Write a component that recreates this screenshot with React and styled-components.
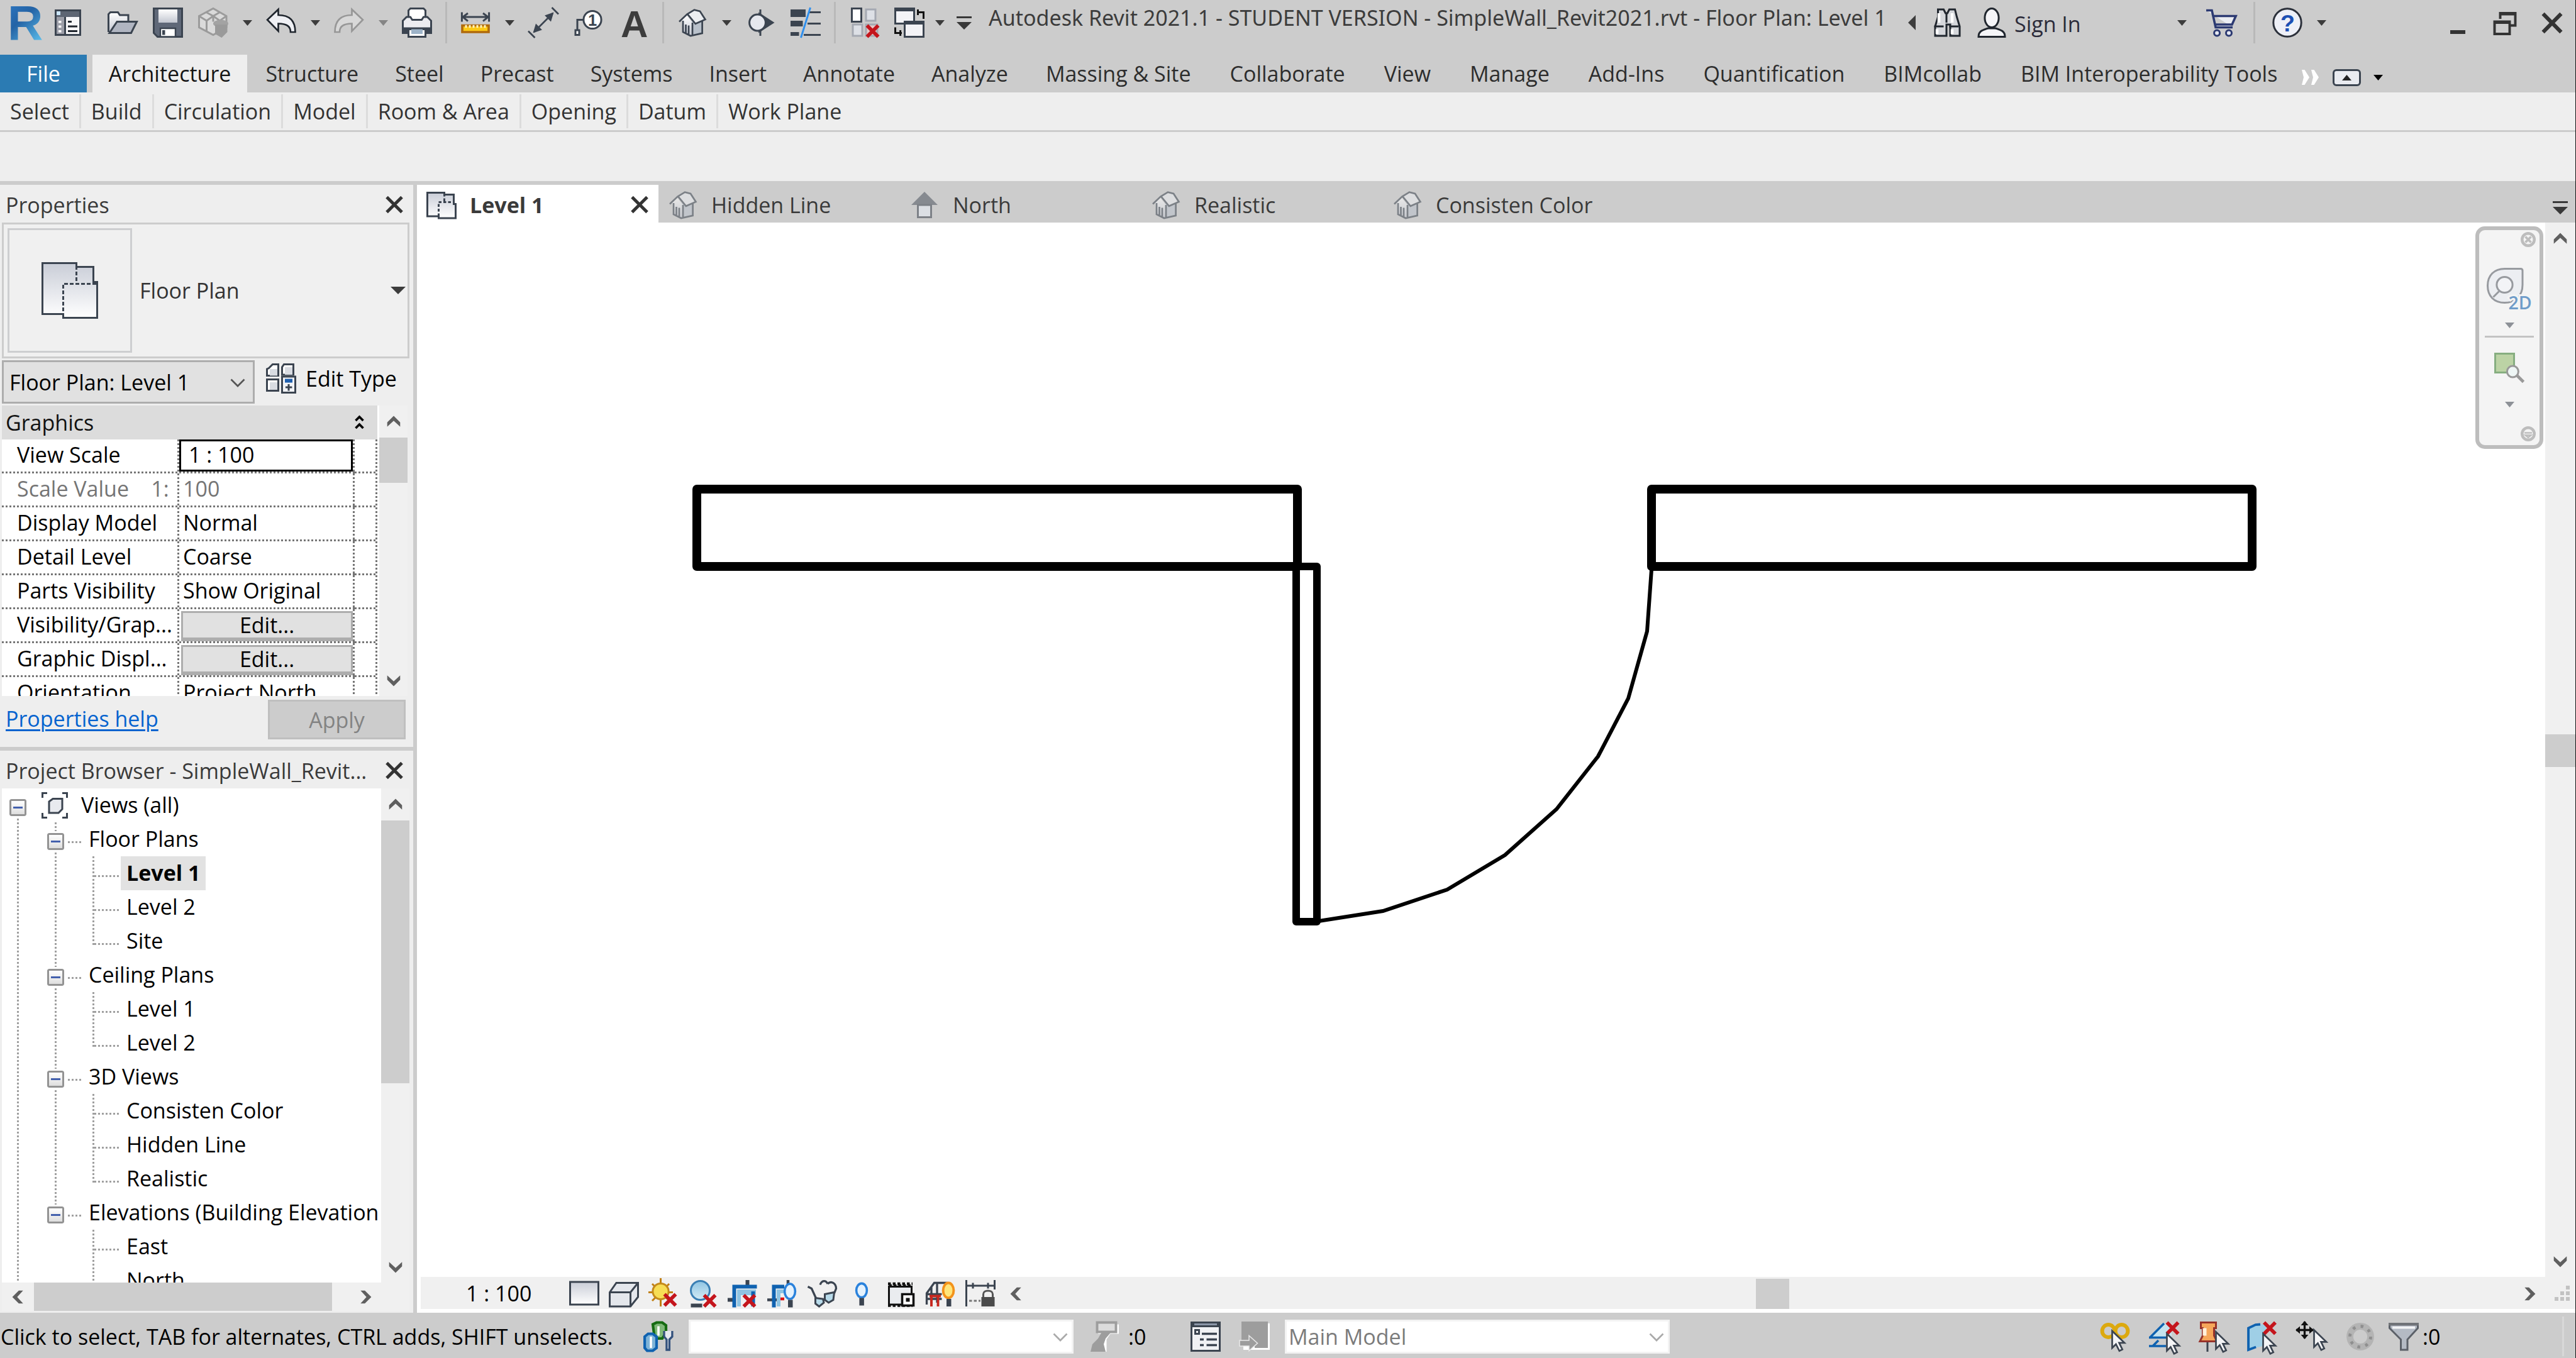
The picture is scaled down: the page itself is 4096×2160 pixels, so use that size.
import React from "react";
import styled, { createGlobalStyle, css } from "styled-components";

const GlobalStyle = createGlobalStyle`
  * { box-sizing: border-box; }
  html, body { margin: 0; padding: 0; }
  body, button, input, select, table {
    font-family: "Open Sans", "Noto Sans", sans-serif;
    font-size: 34px;
    color: #1a1a1a;
  }
  button { background: none; border: 0; padding: 0; margin: 0; }
  ul, h2 { margin: 0; padding: 0; list-style: none; font-size: inherit; font-weight: 400; }
`;

const INK = "#3b4450";

/* ---------- icon drawings, on a 16-unit grid ---------- */

const Svg = styled.svg`
  display: block;
  flex: none;
  overflow: visible;
`;

const Icon = ({ size = 48, children }) => (
  <Svg width={size} height={size} viewBox="0 0 16 16" fill="none" aria-hidden="true">
    {children}
  </Svg>
);

const Triangle = ({ color = "#3c3c3c", w = 15, h = 9 }) => (
  <Svg width={w} height={h} viewBox="0 0 10 6" preserveAspectRatio="none" aria-hidden="true">
    <path d="M0 0h10l-5 6z" fill={color} />
  </Svg>
);

const turns = { up: 0, right: 90, down: 180, left: 270 };
const ScrollMark = ({ dir }) => (
  <Svg width="24" height="24" viewBox="0 0 14 14" aria-hidden="true">
    <path d="M1 11.500V7.500L7 1.500l6 6v4L7 6z" fill="#5f5f5f" transform={`rotate(${turns[dir]} 7 7)`} />
  </Svg>
);

const ThinChevron = ({ color }) => (
  <Svg width="24" height="15" viewBox="0 0 16 10" fill="none" aria-hidden="true">
    <path d="M1 1l7 7 7-7" stroke={color} strokeWidth="1.8" />
  </Svg>
);

const CrossMark = ({ w = 30 }) => (
  <Svg width={w} height={w - 3} viewBox="0 0 10 9" preserveAspectRatio="none" fill="none" aria-hidden="true">
    <path d="M1 .5l8 8M9 .5l-8 8" stroke="#333" strokeWidth="1.7" />
  </Svg>
);

const BarDown = () => (
  <Svg width="24" height="21" viewBox="0 0 8 7" aria-hidden="true">
    <path d="M0 0h8v1H0zM0 3h8L4 7z" fill="#383838" />
  </Svg>
);

const Logo = () => (
  <Svg width="48" height="60" viewBox="0 0 48 60" aria-hidden="true">
    <defs>
      <linearGradient id="logo" x1="0" y1="0" x2="0.6" y2="1">
        <stop offset="0" stopColor="#2f7cc9" />
        <stop offset="0.5" stopColor="#2463a5" />
        <stop offset="1" stopColor="#57b7e6" />
      </linearGradient>
    </defs>
    <text x="0" y="57" fontFamily="Liberation Sans Narrow, Liberation Sans, sans-serif" fontWeight="700" fontSize="78" fill="url(#logo)">R</text>
  </Svg>
);

const Defs = () => (
  <Svg width="0" height="0" aria-hidden="true">
    <defs>
      <linearGradient id="steel" x1="0" y1="0" x2="0" y2="1">
        <stop offset="0" stopColor="#c9cdd7" />
        <stop offset="1" stopColor="#ffffff" />
      </linearGradient>
      <linearGradient id="steelDown" x1="0" y1="0" x2="0" y2="1">
        <stop offset="0" stopColor="#ffffff" />
        <stop offset="1" stopColor="#c3c7d1" />
      </linearGradient>
      <linearGradient id="sky" x1="0" y1="0" x2="0" y2="1">
        <stop offset="0" stopColor="#8fc4e2" />
        <stop offset="1" stopColor="#d3ebf5" />
      </linearGradient>
    </defs>
  </Svg>
);

const RedX = ({ x = 9, y = 8, s = 6 }) => (
  <path d={`M${x} ${y}l${s} ${s}M${x + s} ${y}l${-s} ${s}`} stroke="#c4151c" strokeWidth="1.9" />
);

const Pointer = ({ x = 6, y = 5 }) => (
  <path transform={`translate(${x} ${y})`} d="M.5 .5v9l2-2 1.8 3.6 1.6-.8-1.7-3.5h2.8z" fill="#f4f4f6" stroke={INK} strokeWidth=".9" />
);

const House = ({ faded }) => (
  <g opacity={faded ? 0.55 : 1}>
    <path d="M3 7v6l4 2 6-1.5V7z" fill="#b9c1cb" />
    <path d="M2.2 6.5L5 4.2 8 8v7l-5-2z" fill="url(#steelDown)" />
    <path d="M5.2 3.5L9 1.2l3 .8 2.7 4-5.2 2.5z" fill="#eceef1" />
    <path d="M1 7.5L5.2 3.5 9 1.2l3 .8L14.8 6.3 9.6 8.6 5.5 3.6M3 7v6l4 2 6.2-1.4V7M8 8v6.5M4.5 9v4.5M6 9.5v5" stroke={INK} strokeWidth=".9" />
  </g>
);

const Sheets = () => (
  <>
    <path d="M.5 1.500h9v1h5v5h1v7.500H6.500v-1h-6z" fill="url(#steel)" stroke={INK} />
    <path d="M9.500 2v5M6.500 14V6.500H15" stroke={INK} strokeDasharray="1.500 1" />
  </>
);

const icons = {
  recent: (
    <>
      <path d="M1.500 1.500h13v13h-13z" fill="#f7f7f9" stroke={INK} />
      <path d="M2 2h12v3H2z" fill="#5d6573" />
      <path d="M2 2h2v2H2z" fill="#cbe6fa" />
      <path d="M2 5h4v9H2z" fill="#9c9ea8" />
      <path d="M3 7h1.500v1.200H3zM3 9.500h1.500v1.200H3zM3 12h1.500v1.200H3z" fill="#fff" />
      <path d="M6.500 5v9" stroke={INK} />
      <path d="M8 7.500h2M8 10h5M8 12.500h5" stroke="#20262e" />
    </>
  ),
  open: (
    <>
      <path d="M.5 13V3.500l1-1h4l1 1.500h4.500v4" fill="url(#steelDown)" stroke={INK} />
      <path d="M1 13.500L5 7.500h10.500l-3 6z" fill="#b0b5c1" stroke={INK} />
    </>
  ),
  save: (
    <>
      <path d="M.5.5h15v15H2.500l-2-2z" fill="#5f6878" stroke={INK} />
      <path d="M3 1h10v7H3z" fill="url(#steelDown)" />
      <path d="M4 11h8v4.500H4z" fill="#fff" stroke={INK} strokeWidth=".8" />
      <path d="M5 12h1.500v2.500H5z" fill={INK} />
    </>
  ),
  sync: (
    <>
      <path d="M.5 4.500L8 .500l7 4v6l-7 4-7.500-4z" fill="#dadada" stroke="#9b9b9b" />
      <path d="M.5 4.500l4 2.500L8 4.500l3.500 2.500L15 4.500M4.500 7v5.500M4.300 2.500L8 4.500l3.500-2M8 4.500v3" stroke="#9b9b9b" />
      <ellipse cx="12" cy="8.500" rx="4" ry="2" fill="#a3a3a3" />
      <path d="M9 9h6.500v4L12.500 16 9 14z" fill="#9a9a9a" />
    </>
  ),
  undo: (
    <path d="M.7 6.500L6.500 1v3c5 0 9 2 9 9h-2.500c0-3-2-4.500-6.500-4.500v4z" fill="#eff0f4" stroke="#20262e" strokeWidth=".9" />
  ),
  redo: (
    <path d="M15.300 6.500L9.500 1v3c-5 0-9 2-9 9H3c0-3 2-4.500 6.500-4.500v4z" fill="#d8d8d8" stroke="#979797" strokeWidth=".9" />
  ),
  print: (
    <>
      <path d="M3.500 6V1.500l1-1h7l1 1V6" fill="#fff" stroke={INK} />
      <path d="M.5 7l2-2h2l1 1.500h5L11.500 5h2l2 2v6.500H.5z" fill="#ececf0" stroke={INK} />
      <path d="M.5 10.500h15v3H.5z" fill={INK} />
      <path d="M3.500 11.500h9v4h-9z" fill="#fff" stroke={INK} />
      <path d="M5 11.500h6V14H5z" fill="#9db3c8" />
    </>
  ),
  measure: (
    <>
      <path d="M1 5h14M4 3L1.300 5 4 7.200M12 3l2.700 2L12 7.200M.8 2.500v5M15.200 2.500v5" stroke={INK} strokeWidth="1" />
      <path d="M1 9.500h14v3.500H1z" fill="#fcc914" stroke="#b06a0c" strokeWidth="1.200" />
      <path d="M2.500 10h11" stroke="#fff2bb" strokeWidth="1.500" strokeDasharray="1 1" />
    </>
  ),
  dimension: (
    <>
      <path d="M3 13L13 3M0 12.500l3.500 3.500M12.500 0L16 3.500" stroke={INK} strokeWidth=".9" />
      <path d="M2.500 13.500L4 8.500l3.300 3.300zM13.500 2.500L12 7.500 8.700 4.200z" fill={INK} />
    </>
  ),
  tag: (
    <>
      <path d="M5 6.500H2v7" stroke={INK} />
      <path d="M1 12h2v2.500H1z" fill="#fff" stroke={INK} />
      <circle cx="10" cy="6.500" r="4.700" fill="#fff" stroke={INK} />
      <text x="7.700" y="9.600" fontFamily="Liberation Sans" fontWeight="700" fontSize="8.500" fill={INK}>1</text>
    </>
  ),
  textA: (
    <text x="1" y="15.500" fontFamily="Liberation Sans" fontWeight="700" fontSize="20" fill="#3c3c3c">A</text>
  ),
  house: <House />,
  houseFaded: <House faded />,
  section: (
    <>
      <path d="M8 1v14" stroke={INK} />
      <path d="M7 2.500L15.500 8 7 13.500z" fill={INK} />
      <circle cx="6.500" cy="8" r="4.300" fill="#e6e8ee" stroke={INK} />
    </>
  ),
  thinLines: (
    <>
      <path d="M0 1h8v4H0zM0 7h6.500v3H0zM0 13h4.500v2H0zM10 2h6v1h-6zM9 8h7v1H9zM7 14h9v1H7z" fill={INK} />
      <path d="M10.500 0L5.500 16" stroke="#2e8fee" />
    </>
  ),
  closeHidden: (
    <>
      <path d="M1.500.500h5v7h-5z" fill="#fff" stroke={INK} />
      <path d="M9 1h5v6H9zM2 9h5v6H2z" fill="#dde0e6" stroke="#a5a9b2" />
      <path d="M9 9h6v6H9z" fill="#e8c9c9" stroke="#a5a9b2" />
      <RedX x={9.500} y={9.500} />
    </>
  ),
  switchWin: (
    <>
      <path d="M.5 1h10v7.500H.500zM5.500 8h10v7.500h-10z" fill="#f3f3f6" stroke={INK} />
      <path d="M0 0h11v2H0zM5 7h11v2H5z" fill={INK} />
      <path d="M12 2.500h3.500V6M12.500 1v3M.500 10.500v3H4M3.200 12v3" stroke="#111" />
    </>
  ),
  binoculars: (
    <>
      <path d="M3.500 1h3l1 2h1l1-2h3l1 4 1.500 5v5h-5V9h-2v6h-6v-5l1.500-5z" fill="#d5d7db" stroke="#20262e" />
      <path d="M1.500 10h5M9.500 10h5M8 3v5" stroke="#20262e" />
      <path d="M4 3v5M11 3v5M3 11.500V14M11 11.500V14" stroke="#fff" strokeWidth="1.500" />
    </>
  ),
  person: (
    <>
      <path d="M1 15.500c0-3 2-3.500 5-4.500h4c3 1 5 1.500 5 4.500z" fill="#f5f5f8" stroke="#20262e" />
      <ellipse cx="8" cy="5.500" rx="3.700" ry="5" fill="#f5f5f8" stroke="#20262e" />
    </>
  ),
  cart: (
    <>
      <path d="M0 1.500h3l2 9h9M3.700 4.500h12l-2 4.500H4.700" fill="#eceef3" stroke="#2c3a72" strokeWidth="1.200" />
      <circle cx="5.700" cy="13.500" r="1.500" fill="#e5e8f2" stroke="#2c3a72" />
      <circle cx="12" cy="13.500" r="1.500" fill="#e5e8f2" stroke="#2c3a72" />
    </>
  ),
  help: (
    <>
      <circle cx="8" cy="8" r="7.400" fill="#eef0f7" stroke="#2b303a" />
      <text x="4.300" y="12.500" fontFamily="Liberation Sans" fontWeight="700" fontSize="12.500" fill="#1d50b4">?</text>
    </>
  ),
  minimize: <path d="M4 12h8v2H4z" fill="#333" />,
  restore: (
    <path d="M5.500 6V3h8v6.500H11M2.500 7.500h8v6.500h-8zM5 3.500h9M2 8h9" stroke="#333" strokeWidth="1.300" />
  ),
  sheets: <Sheets />,
  elevation: (
    <>
      <path d="M8 1l7 7H1z" fill="#868a90" />
      <path d="M4.500 8h7v6.500h-7z" fill="#dcdfe4" stroke="#7d8187" />
    </>
  ),
  editType: (
    <>
      <path d="M1.500 2.500l2-2h3v6h-6V3zM9.500.500h5V6H8.500v-4zM.500 8.500h6v6h-6z" fill="#fff" stroke={INK} />
      <path d="M2 3h4v3.500H2zM10 2h4v4h-4zM2 10h4v4H2z" fill="#d9dce2" />
      <path d="M8.500 7h7v8.500h-7z" fill="#f2f3f6" stroke={INK} />
      <path d="M10 8.200h4v2h-4z" fill="#1f5fae" />
      <path d="M12 11v3.500M10.300 12.700h3.500" stroke={INK} />
    </>
  ),
  viewsAll: (
    <>
      <path d="M1.500 4V1.500H4M12 1.500h2.500V4M1.500 12v2.500H4M12 14.500h2.500V12" stroke={INK} />
      <path d="M5 6l2-1.500h5V10l-2 2H5z" fill="#e8eaef" stroke={INK} />
    </>
  ),
  rectStyle: <path d="M.5 2h15v12H.500z" fill="url(#steel)" stroke={INK} />,
  boxStyle: (
    <path d="M.5 7.500L4 2.500h11.500v7.500L11.500 15H.500zM.500 7.500h11V15M11.500 7.500l4-5" fill="#e4e7ec" stroke={INK} />
  ),
  sunOff: (
    <>
      <path d="M6.500 0v15M0 7.500h13M2 3l9 9M11 3l-9 9" stroke="#c07f12" />
      <circle cx="6.500" cy="7" r="4.200" fill="#f7dd55" stroke="#c58a1b" />
      <RedX x={8.500} y={8.500} />
    </>
  ),
  shadowOff: (
    <>
      <path d="M1.500 13.500h6v2h-6z" fill={INK} />
      <circle cx="6.500" cy="6.500" r="5" fill="url(#sky)" stroke="#3a7fb4" />
      <RedX x={8.500} y={9} />
    </>
  ),
  cropOff: (
    <>
      <path d="M0 11.500h4M10.500 1v3" stroke={INK} strokeWidth="2" />
      <path d="M3.500 15.500V4.500h12" stroke="#0f62b0" strokeWidth="2" />
      <path d="M5 6h10v3H7v6H5z" fill="#8fc4e2" />
      <path d="M13.500 7v8" stroke="#0f62b0" strokeWidth="2" />
      <RedX x={8.500} y={9} />
    </>
  ),
  cropShow: (
    <>
      <path d="M0 11.500h7M11 1v3" stroke={INK} strokeWidth="1.500" />
      <path d="M3.500 15.500V4.500H9" stroke="#0f62b0" strokeWidth="2" />
      <path d="M5 6h4v2H7v7H5z" fill="#8fc4e2" />
      <path d="M7 11h2" stroke="#d11" strokeWidth="1.500" />
      <ellipse cx="12" cy="7" rx="2.800" ry="4" fill="#e5f2fd" stroke="#2a82dc" strokeWidth="1.200" />
      <path d="M11 11.500h2.500v4H11z" fill={INK} />
    </>
  ),
  glasses: (
    <>
      <path d="M.500 4.500L2.500 5.500 5 11M7 3.500c1-2.500 3-2.500 4-.5M11 3c2-2 4.500 0 4.500 2.500L14.500 8" stroke={INK} strokeWidth="1.100" />
      <path d="M4.500 10.500l4 .5.500 2-2.500 2-2-1.500zM9.500 8.500l5-1-.500 4-2.500 1.500-2-1.500z" fill="#b8dbea" stroke={INK} />
    </>
  ),
  bulb: (
    <>
      <ellipse cx="8" cy="6.500" rx="2.800" ry="3.700" fill="#e5f2fd" stroke="#2a82dc" strokeWidth="1.200" />
      <path d="M6.800 10.500h2.500v4H6.800z" fill={INK} />
    </>
  ),
  film: (
    <>
      <path d="M1 3h13M1 14.500h13M1.500 4h12" stroke="#111" strokeWidth="1.500" strokeDasharray="1.500 1" />
      <path d="M1.500 4.500h12V14h-12z" fill="#eaecef" stroke="#111" />
      <path d="M8.500 8.500h6V14.500h-6z" fill="#fff" stroke="#111" strokeWidth="1.200" />
      <path d="M10.500 10.500h2v2h-2z" fill="#111" />
    </>
  ),
  analytic: (
    <>
      <path d="M.500 14V8l4-5.500h7M.500 8.500h8M3 4.500v9M6 3v10M.500 11h8" stroke={INK} strokeWidth="1.100" />
      <path d="M2 9.500h6M3 9.500V15M6.500 9.500V15" stroke="#c7281f" strokeWidth="1.300" />
      <ellipse cx="12" cy="6.500" rx="2.800" ry="4" fill="#ffe57a" stroke="#f3921a" strokeWidth="1.300" />
      <path d="M11 11h2.500v4H11z" fill={INK} />
    </>
  ),
  constraints: (
    <>
      <path d="M.500 1v14M15.500 1v5M1 4h14M4 2.500v3M12 2.500v3" stroke={INK} />
      <path d="M2 12h6" stroke="#777" strokeDasharray="1.500 1" />
      <path d="M9.500 10V8.500c0-2.500 5-2.500 5 0V10" stroke="#555" />
      <path d="M8.500 10h7v5h-7z" fill="#4b4b4b" />
    </>
  ),
  worksets: (
    <>
      <path d="M5 1.500l2-1h3l2 1.500v4L10 9H6z" fill="#7fb878" stroke="#166b12" strokeWidth="1.400" />
      <path d="M.700 8l1.800-1.500H5L7 8v6l-2 1.500H2L.700 14z" fill="#7fb4d8" stroke="#0f62b0" strokeWidth="1.400" />
      <path d="M4 8v6M8 2.500v5" stroke="#fff" strokeWidth="1.200" />
      <path d="M11 5v3l1.300 1.500V15h1.500V9.500L15.300 8V5" fill="#e5e8ee" stroke="#33517c" strokeWidth="1.100" />
    </>
  ),
  editRequests: (
    <>
      <path d="M4 1.500h11v5h-4.500l-2 3V16H6V6.500H4z" fill="#fff" />
      <path d="M3.500.500h10v5h-10z" fill="#dcdcdc" stroke="#9d9d9d" strokeWidth="1.300" />
      <path d="M6 5.500h5L8 9l-1 3 1 4H0l1-4 3-3z" fill="#9d9d9d" />
    </>
  ),
  designOptions: (
    <>
      <path d="M.500.500h15v15H.500z" fill="#f0f1f4" stroke={INK} />
      <path d="M0 0h16v3H0z" fill={INK} />
      <path d="M2 1h12v1H2z" fill="#8b96a8" />
      <path d="M2.500 4.500h2v2h-2z" stroke={INK} />
      <path d="M6 6.500h8M5 9.500h2M8.500 9.500H14M5 12.500h2M8.500 12.500H14" stroke={INK} strokeWidth="1.200" />
    </>
  ),
  exitOption: (
    <>
      <path d="M2 1h14v14H2z" fill="#fff" />
      <path d="M1 0h14v14H8V7H1z" fill="#9d9d9d" />
      <path d="M1 6h8v4H1z" fill="#9d9d9d" />
      <path d="M0 10h5V7.500l4.500 4L5 15.500V13H0z" fill="#9d9d9d" stroke="#e9e9e9" strokeWidth=".5" />
    </>
  ),
  selLinks: (
    <>
      <circle cx="4.500" cy="5" r="3.300" stroke="#dca90f" strokeWidth="2" />
      <circle cx="11.500" cy="5" r="3.300" stroke="#dca90f" strokeWidth="2" />
      <Pointer x={6} y={4.500} />
    </>
  ),
  selUnderlay: (
    <>
      <path d="M1 8.500L8 1h4v7.500z" fill="#c5e3ef" />
      <path d="M.500 8.500L8 1M0 8.500h10M0 13h9M2 13l3-3" stroke="#0f62b0" strokeWidth="1.200" />
      <RedX x={9.500} y={0.500} />
      <Pointer x={9} y={6} />
    </>
  ),
  selPinned: (
    <>
      <path d="M5 10v6" stroke={INK} />
      <path d="M1.500.500h8v3h-1v4l1.500 3h-9l1.500-3v-4h-1z" fill="#f6a65a" stroke="#97322a" />
      <path d="M3.500 3.500v4" stroke="#fff1dc" strokeWidth="2" />
      <Pointer x={9} y={5} />
    </>
  ),
  selFace: (
    <>
      <path d="M.700 3.500L5 1.500h5v11l-9.300 2.500z" fill="#9fcfe6" />
      <path d="M7 1.500L4.500 1.700.700 3.500V15l4-1.500" stroke="#0f62b0" strokeWidth="1.300" />
      <RedX x={9} y={0.500} />
      <Pointer x={8} y={6} />
    </>
  ),
  selDrag: (
    <>
      <Pointer x={9} y={4} />
      <path d="M4.500 0v9M0 4.500h9" stroke="#111" strokeWidth="1.100" />
      <path d="M4.500-.3L6.500 2h-4zM4.500 9.300L2.500 7h4zM-.300 4.500L2 2.500v4zM9.300 4.500L7 2.500v4z" fill="#111" />
    </>
  ),
  gear: (
    <>
      <circle cx="8" cy="8" r="5.500" stroke="#b4b4b4" strokeWidth="3.600" />
      <circle cx="8" cy="8" r="5.500" stroke="#8f8f8f" strokeWidth="1.600" strokeDasharray="1.500 2.820" />
    </>
  ),
  filter: (
    <>
      <path d="M.500 1.500h15v2L10 9.500V15H6.500V9.500L.500 3.500z" fill="#b4bac4" stroke="#5b6068" />
      <path d="M2 3.200h12" stroke="#f3f4f6" strokeWidth="1.300" />
      <path d="M0 .700h16v1.500H0z" fill="#707378" />
    </>
  ),
};

/* ---------- shell ---------- */

const Shell = styled.div`
  display: flex;
  flex-direction: column;
  width: 100%;
  height: 100vh;
  overflow: hidden;
  background: #eee;
  border-right: 1px solid #111;
  white-space: nowrap;
`;

const TitleBar = styled.header`
  display: flex;
  align-items: center;
  height: 87px;
  padding-bottom: 15px;
  background: #ccc;
`;

const IconCell = styled.button`
  display: flex;
  align-items: center;
  justify-content: center;
  flex: none;
  width: ${(p) => p.$w || 72}px;
  height: 72px;
`;

const Rule = styled.span`
  flex: none;
  width: 3px;
  height: 66px;
  margin: 0 9px;
  background: #b9b9b9;
`;

const Space = styled.span`
  flex: none;
  width: ${(p) => p.$w}px;
`;

const Caption = styled.div`
  flex: 1;
  align-self: flex-start;
  padding-left: 12px;
  font-family: "Noto Sans", "Open Sans", sans-serif;
  line-height: 57px;
  color: #3c3c3c;
`;

const SignIn = styled.button`
  flex: none;
  width: 248px;
  padding-top: 3px;
  text-align: left;
  color: #2b2b3a;
`;

const Tool = ({ name, label, w }) => (
  <IconCell type="button" aria-label={label} title={label} $w={w}>
    <Icon>{icons[name]}</Icon>
  </IconCell>
);

const Drop = ({ label, w = 36, color }) => (
  <IconCell type="button" aria-label={label} $w={w}>
    <Triangle color={color} />
  </IconCell>
);

/* ---------- ribbon ---------- */

const TabStrip = styled.nav`
  display: flex;
  align-items: stretch;
  height: 60px;
  background: #ccc;
`;

const tabPadding = { file: 42, active: 26, roomy: 31, plain: 29 };

const RibbonTab = styled.button`
  padding: 0 ${(p) => tabPadding[p.$kind]}px;
  color: #2d2d2d;
  ${(p) =>
    p.$kind === "file" &&
    css`
      background: #2b7bb3;
      color: #fff;
      margin-right: 9px;
    `}
  ${(p) =>
    p.$kind === "active" &&
    css`
      background: #eee;
      color: #151515;
    `}
`;

const PanelStrip = styled.div`
  display: flex;
  align-items: center;
  height: 63px;
  border-bottom: 3px solid #ccc;
`;

const PanelTitle = styled.button`
  height: 54px;
  padding: 0 16px 0 16px;
  color: #333;
  border-right: 3px solid #dcdcdc;
  &:last-child {
    border-right: 0;
  }
`;

const OptionsBar = styled.div`
  height: 84px;
  border-bottom: 6px solid #ccc;
`;

const Work = styled.main`
  display: flex;
  flex: 1;
  min-height: 0;
`;

/* ---------- palettes ---------- */

const Dock = styled.aside`
  display: flex;
  flex-direction: column;
  flex: none;
  width: 663px;
  border-right: 6px solid #ccc;
`;

const Palette = styled.section`
  display: flex;
  flex-direction: column;
  padding: 0 6px 0 3px;
  ${(p) =>
    p.$grow
      ? css`
          flex: 1;
          min-height: 0;
          padding-bottom: 3px;
        `
      : css`
          border-bottom: 6px solid #ccc;
        `}
`;

const PaletteHead = styled.div`
  display: flex;
  align-items: center;
  justify-content: space-between;
  height: 60px;
  padding: 3px 9px 0 6px;
  color: #3a3a3a;
`;

const TypePicker = styled.button`
  display: flex;
  align-items: center;
  height: 216px;
  padding: 0 3px 0 6px;
  border: 3px solid #ccc;
  background: #f0f0f0;
  color: #333;
`;

const Thumb = styled.span`
  display: flex;
  align-items: center;
  justify-content: center;
  width: 198px;
  height: 198px;
  margin-right: 12px;
  border: 3px solid #cdced0;
`;

const Push = styled.span`
  flex: 1;
`;

const InstanceRow = styled.div`
  display: flex;
  align-items: center;
  height: 75px;
  padding-right: 12px;
`;

const SelectBox = styled.label`
  position: relative;
  display: flex;
  flex: none;
  width: ${(p) => p.$w}px;
  height: ${(p) => p.$h}px;
  svg {
    position: absolute;
    right: ${(p) => p.$inset}px;
    top: calc(50% - 6px);
    pointer-events: none;
  }
`;

const Select = styled.select`
  appearance: none;
  width: 100%;
  padding: 0 9px;
  border: 3px solid #adadad;
  border-radius: 0;
  background: #e1e1e1;
  color: #000;
  opacity: 1;
`;

const StatusSelect = styled(Select)`
  padding: 0 3px;
  background: #fff;
  border-color: #f3f3f3;
  color: #7b7b7b;
`;

const EditType = styled.button`
  display: flex;
  align-items: center;
  gap: 15px;
  margin-left: 18px;
  height: 63px;
  align-self: flex-start;
  color: #000;
`;

const GridArea = styled.div`
  display: flex;
  height: 462px;
`;

const GridBody = styled.div`
  width: 600px;
  overflow: hidden;
  background: #fff;
`;

const GroupHead = styled.button`
  display: flex;
  align-items: center;
  justify-content: space-between;
  width: 597px;
  height: 54px;
  padding: 0 21px 0 6px;
  background: #dcdcdc;
  color: #111;
`;

const PropTable = styled.table`
  width: 597px;
  table-layout: fixed;
  border-collapse: collapse;
  color: #000;
`;

const cell = css`
  height: 54px;
  padding: 0 0 6px;
  text-align: left;
  font-weight: 400;
  line-height: 48px;
  color: ${(p) => (p.$dim ? "#757575" : "#000")};
  background:
    repeating-linear-gradient(90deg, #757575 0 3px, transparent 3px 6px) left bottom / 100% 3px no-repeat,
    repeating-linear-gradient(180deg, #757575 0 3px, transparent 3px 6px) right top / 3px 100% no-repeat;
`;

const NameCell = styled.th`
  ${cell}
  width: ${(p) => p.$w}px;
  padding-left: 24px;
  white-space: pre;
  overflow: hidden;
`;

const ValueCell = styled.td`
  ${cell}
  width: ${(p) => p.$w}px;
  padding-left: ${(p) => (p.$flush ? 0 : 6)}px;
  padding-right: 3px;
  padding-bottom: ${(p) => (p.$flush ? 3 : 6)}px;
`;

const ScaleInput = styled.input`
  display: block;
  width: 100%;
  height: 51px;
  padding: 0 12px 3px;
  border: 3px solid #000;
  background: #fff;
  color: #000;
`;

const EditButton = styled.button`
  display: block;
  width: calc(100% - 3px);
  height: 48px;
  margin: 3px 0 0 3px;
  border: 3px solid #adadad;
  border-bottom-width: 6px;
  background: #e1e1e1;
  color: #000;
  line-height: 39px;
`;

const PaletteFoot = styled.div`
  display: flex;
  align-items: center;
  justify-content: space-between;
  height: 81px;
  padding: 0 6px 6px;
  a {
    color: #0563cf;
    line-height: 51px;
    padding-bottom: 3px;
    text-underline-offset: 4px;
    text-decoration-thickness: 3px;
  }
`;

const Apply = styled.button`
  width: 219px;
  height: 63px;
  border: 3px solid #bfbfbf;
  background: #ccc;
  color: #838383;
`;

/* ---------- scroll bars ---------- */

const VBar = styled.div`
  display: flex;
  flex-direction: column;
  flex: none;
  width: ${(p) => p.$w || 45}px;
  background: #f0f0f0;
`;

const HBar = styled.div`
  display: flex;
  flex: 1;
  background: #f0f0f0;
`;

const ScrollButton = styled.button`
  display: flex;
  align-items: center;
  justify-content: center;
  flex: none;
  ${(p) => (p.$across ? "width" : "height")}: 51px;
`;

const Track = styled.span`
  flex: ${(p) => p.$n} ${(p) => p.$n} 0;
`;

const ScrollThumb = styled.span`
  flex: ${(p) => p.$n} ${(p) => p.$n} 0;
  background: #cdcdcd;
`;

const WideBar = styled(HBar)`
  height: 48px;
  align-self: flex-end;
`;

const FooterBar = styled.div`
  display: flex;
  height: 45px;
  padding-right: 45px;
  background: #f0f0f0;
`;

/* ---------- project tree ---------- */

const Browser = styled.div`
  display: flex;
  flex: 1;
  min-height: 0;
`;

const Tree = styled.ul`
  flex: 1;
  min-width: 0;
  overflow: hidden;
  background: #fff;
`;

const TreeRow = styled.li`
  display: flex;
  align-items: center;
  height: 54px;
  color: #000;
`;

const vDots = "repeating-linear-gradient(180deg, #a0a0a0 0 3px, transparent 3px 6px)";
const hDots = "repeating-linear-gradient(90deg, #a0a0a0 0 3px, transparent 3px 6px)";
const spans = { full: "0 / 3px 100%", top: "0 / 3px 33px", none: "0 / 0 0", bottom: "100% / 3px 24px" };

const Guide = styled.span`
  display: flex;
  flex: none;
  align-items: center;
  width: ${(p) => (p.$branch ? 69 : 60)}px;
  height: 54px;
  padding: 6px 0 0 12px;
  background:
    ${vDots} 24px ${(p) => spans[p.$line || "full"]} no-repeat
    ${(p) => p.$branch && css`, ${hDots} 27px 30px / 100% 3px no-repeat`};
`;

const Expander = styled.button`
  display: flex;
  align-items: center;
  justify-content: center;
  width: 27px;
  height: 27px;
  border: 3px solid #939393;
  border-radius: 3px;
  background: linear-gradient(#fff, #dedede);
  outline: 3px solid #fff;
  &::after {
    content: "";
    width: 15px;
    height: 3px;
    background: #4360ad;
  }
`;

const TreeLabel = styled.span`
  height: 54px;
  padding: 0 9px;
  line-height: 52px;
  ${(p) =>
    p.$on &&
    css`
      background: #e2e2e2;
      font-weight: 700;
    `}
`;

const tree = [
  { depth: 0, text: "Views (all)" },
  { depth: 1, text: "Floor Plans" },
  { depth: 2, text: "Level 1", on: true },
  { depth: 2, text: "Level 2" },
  { depth: 2, text: "Site", last: true },
  { depth: 1, text: "Ceiling Plans" },
  { depth: 2, text: "Level 1" },
  { depth: 2, text: "Level 2", last: true },
  { depth: 1, text: "3D Views" },
  { depth: 2, text: "Consisten Color" },
  { depth: 2, text: "Hidden Line" },
  { depth: 2, text: "Realistic", last: true },
  { depth: 1, text: "Elevations (Building Elevation", last: true },
  { depth: 2, text: "East", bare: true },
  { depth: 2, text: "North", bare: true },
];

const TreeItem = ({ depth, text, on, last, bare }) => (
  <TreeRow>
    {depth === 0 && (
      <>
        <Guide $line="bottom">
          <Expander type="button" aria-label="Collapse" />
        </Guide>
        <Icon>{icons.viewsAll}</Icon>
        <Space $w={9} />
      </>
    )}
    {depth > 0 && <Guide />}
    {depth === 1 && (
      <Guide $branch $line={last ? "top" : "full"}>
        <Expander type="button" aria-label="Collapse" />
      </Guide>
    )}
    {depth === 2 && (
      <>
        <Guide $line={bare ? "none" : "full"} />
        <Guide $branch $line={last ? "top" : "full"} />
      </>
    )}
    <TreeLabel $on={on}>{text}</TreeLabel>
  </TreeRow>
);

/* ---------- document area ---------- */

const Documents = styled.section`
  display: flex;
  flex-direction: column;
  flex: 1;
  min-width: 0;
  background: #fff;
`;

const DocTabs = styled.div`
  display: flex;
  height: 60px;
  background: #ccc;
`;

const DocTab = styled.button`
  display: flex;
  align-items: center;
  gap: 21px;
  width: 384px;
  padding: 3px 15px 0;
  color: #3a3a3a;
  ${(p) =>
    p.$on &&
    css`
      background: #fff;
      font-weight: 700;
    `}
`;

const CanvasRow = styled.div`
  display: flex;
  flex: 1;
  min-height: 0;
`;

const Canvas = styled.div`
  position: relative;
  flex: 1;
  min-width: 0;
`;

const Plan = styled.svg`
  display: block;
  width: 100%;
  height: 100%;
`;

const NavBar = styled.div`
  position: absolute;
  top: 6px;
  right: 3px;
  display: flex;
  flex-direction: column;
  align-items: center;
  width: 108px;
  height: 354px;
  padding: 3px 6px 6px;
  border: 6px solid #bdbdbd;
  border-radius: 15px;
  background: #f4f4f4;
`;

const NavSmall = styled.button`
  display: flex;
  align-self: flex-end;
  flex: none;
`;

const NavTool = styled.button`
  display: flex;
  flex: none;
  flex-direction: column;
  align-items: center;
  justify-content: ${(p) => (p.$end ? "space-between" : "flex-end")};
  gap: 18px;
  width: 78px;
  height: ${(p) => (p.$end ? 111 : 144)}px;
  padding: ${(p) => (p.$end ? "24px 0 0" : "0 0 12px")};
  border-bottom: ${(p) => (p.$end ? 0 : 3)}px solid #c3c3c3;
  margin-bottom: ${(p) => (p.$end ? 30 : 0)}px;
`;

const ViewBar = styled.div`
  display: flex;
  align-items: center;
  height: 51px;
  margin: 0 0 6px 6px;
  background: #f0f0f0;
`;

const ScaleButton = styled.button`
  width: 228px;
  padding-left: 72px;
  text-align: left;
  color: #000;
`;

const ViewTool = styled.button`
  display: flex;
  justify-content: center;
  flex: none;
  width: 63px;
`;

const Grip = styled.span`
  flex: none;
  width: 24px;
  height: 24px;
  margin: 0 9px 0 15px;
  background:
    linear-gradient(#c2c2c2 0 0) 18px 0 / 6px 6px no-repeat,
    repeating-linear-gradient(90deg, #c2c2c2 0 6px, transparent 6px 9px) 9px 9px / 15px 6px no-repeat,
    repeating-linear-gradient(90deg, #c2c2c2 0 6px, transparent 6px 9px) 0 18px / 24px 6px no-repeat;
`;

/* ---------- status bar ---------- */

const StatusBar = styled.footer`
  display: flex;
  align-items: center;
  height: 72px;
  padding-top: 3px;
  background: #ccc;
  color: #000;
`;

const Hint = styled.span`
  flex: none;
  width: 1011px;
  padding-left: 1px;
`;

const Count = styled.span`
  flex: none;
  width: ${(p) => p.$w}px;
`;

const EndRule = styled.span`
  width: 3px;
  height: 63px;
  margin: 0 18px 0 0;
  background: #d8d8d8;
`;

const FloorPlanLarge = () => (
  <Svg width="96" height="96" viewBox="0 0 32 32" fill="none" aria-hidden="true">
    <path d="M1.500 1.500h18v2h9v8h2v19h-18v-2h-11z" fill="url(#steel)" stroke={INK} />
    <path d="M19.500 3v9M12.500 30V12.500H30" stroke={INK} strokeDasharray="2 1" />
  </Svg>
);

const coreTabs = ["Structure", "Steel", "Precast", "Systems", "Insert", "Annotate", "Analyze"];

const moreTabs = [
  "Massing & Site", "Collaborate", "View", "Manage", "Add-Ins", "Quantification", "BIMcollab",
  "BIM Interoperability Tools",
];

const panels = ["Select", "Build", "Circulation", "Model", "Room & Area", "Opening", "Datum", "Work Plane"];

const docTabs = [
  ["houseFaded", "Hidden Line"],
  ["elevation", "North"],
  ["houseFaded", "Realistic"],
  ["houseFaded", "Consisten Color"],
];

const properties = [
  ["Display Model", "Normal"],
  ["Detail Level", "Coarse"],
  ["Parts Visibility", "Show Original"],
  ["Visibility/Grap...", null],
  ["Graphic Displ...", null],
  ["Orientation", "Project North"],
];

const viewTools = [
  ["rectStyle", "Detail level"], ["boxStyle", "Visual style"], ["sunOff", "Sun path"],
  ["shadowOff", "Shadows"], ["cropOff", "Crop view"], ["cropShow", "Show crop region"],
  ["glasses", "Temporary hide"], ["bulb", "Reveal hidden"], ["film", "Temporary view properties"],
  ["analytic", "Analytical model"], ["constraints", "Reveal constraints"],
];

const selectTools = [
  ["selLinks", "Select links"], ["selUnderlay", "Select underlay elements"],
  ["selPinned", "Select pinned elements"], ["selFace", "Select elements by face"],
  ["selDrag", "Drag elements on selection"], ["gear", "Background processes"],
];

export default function App() {
  return (
    <Shell>
      <GlobalStyle />
      <Defs />
      <TitleBar>
        <IconCell type="button" aria-label="Revit"><Logo /></IconCell>
        <Tool name="recent" label="Home" />
        <Space $w={15} />
        <Tool name="open" label="Open" />
        <Tool name="save" label="Save" />
        <Tool name="sync" label="Synchronize" />
        <Drop label="Synchronize options" />
        <Tool name="undo" label="Undo" />
        <Drop label="Undo list" />
        <Tool name="redo" label="Redo" />
        <Drop label="Redo list" color="#858585" />
        <Tool name="print" label="Print" />
        <Rule />
        <Tool name="measure" label="Measure" />
        <Drop label="Measure options" />
        <Tool name="dimension" label="Aligned dimension" />
        <Tool name="tag" label="Tag by category" />
        <Tool name="textA" label="Text" />
        <Rule />
        <Tool name="house" label="Default 3D view" />
        <Drop label="3D view options" />
        <Tool name="section" label="Section" />
        <Tool name="thinLines" label="Thin lines" />
        <Rule />
        <Tool name="closeHidden" label="Close inactive views" />
        <Tool name="switchWin" label="Switch windows" />
        <Drop label="Switch windows list" w={24} />
        <IconCell type="button" aria-label="Customize toolbar" $w={54}><BarDown /></IconCell>
        <Caption>Autodesk Revit 2021.1 - STUDENT VERSION - SimpleWall_Revit2021.rvt - Floor Plan: Level 1</Caption>
        <IconCell type="button" aria-label="Collapse search" $w={39}>
          <Svg width="12" height="24" viewBox="0 0 4 8" aria-hidden="true"><path d="M4 0v8L0 4z" fill="#3c3c3c" /></Svg>
        </IconCell>
        <Tool name="binoculars" label="Search" />
        <Tool name="person" label="Account" />
        <SignIn type="button">Sign In</SignIn>
        <Drop label="Sign in options" />
        <Space $w={9} />
        <Tool name="cart" label="App store" />
        <Space $w={6} />
        <Rule />
        <Space $w={6} />
        <Tool name="help" label="Help" />
        <Drop label="Help options" />
        <Space $w={161} />
        <Tool name="minimize" label="Minimize" w={75} />
        <Tool name="restore" label="Restore" w={75} />
        <IconCell type="button" aria-label="Close" $w={75}><CrossMark w={36} /></IconCell>
      </TitleBar>

      <TabStrip>
        <RibbonTab type="button" $kind="file">File</RibbonTab>
        <RibbonTab type="button" $kind="active">Architecture</RibbonTab>
        {coreTabs.map((t) => (
          <RibbonTab type="button" key={t} $kind="plain">{t}</RibbonTab>
        ))}
        {moreTabs.map((t) => (
          <RibbonTab type="button" key={t} $kind="roomy">{t}</RibbonTab>
        ))}
        <IconCell type="button" aria-label="More tabs" $w={42}>
          <Svg width="27" height="24" viewBox="0 0 9 8" aria-hidden="true">
            <path d="M0 0h1.500L4 4 1.500 8H0l1-4zM5 0h1.500L9 4 6.500 8H5l1-4z" fill="#fff" />
          </Svg>
        </IconCell>
        <IconCell type="button" aria-label="Minimize ribbon" $w={75}>
          <Svg width="45" height="27" viewBox="0 0 15 9" aria-hidden="true">
            <rect x=".5" y=".5" width="14" height="8" rx="1.500" fill="#e9ebf0" stroke={INK} />
            <path d="M7.500 3L10 6H5z" fill="#222" />
          </Svg>
        </IconCell>
        <Drop label="Ribbon options" w={24} color="#000" />
      </TabStrip>

      <PanelStrip>
        {panels.map((p) => (
          <PanelTitle type="button" key={p}>{p}</PanelTitle>
        ))}
      </PanelStrip>
      <OptionsBar />

      <Work>
        <Dock>
          <Palette>
            <PaletteHead>
              <h2>Properties</h2>
              <button type="button" aria-label="Close properties"><CrossMark /></button>
            </PaletteHead>
            <TypePicker type="button">
              <Thumb><FloorPlanLarge /></Thumb>
              Floor Plan
              <Push />
              <Triangle w={24} h={12} />
            </TypePicker>
            <InstanceRow>
              <SelectBox $w={402} $h={69} $inset={15}>
                <Select aria-label="Instance" defaultValue="l1">
                  <option value="l1">Floor Plan: Level 1</option>
                </Select>
                <ThinChevron color="#555" />
              </SelectBox>
              <EditType type="button">
                <Icon>{icons.editType}</Icon>
                Edit Type
              </EditType>
            </InstanceRow>
            <GridArea>
              <GridBody>
                <GroupHead type="button">
                  Graphics
                  <Svg width="15" height="24" viewBox="0 0 5 8" fill="none" aria-hidden="true">
                    <path d="M.500 3l2-2 2 2M.500 7l2-2 2 2" stroke="#000" strokeWidth="1.200" />
                  </Svg>
                </GroupHead>
                <PropTable>
                  <tbody>
                    <tr>
                      <NameCell scope="row" $w={282}><label htmlFor="scale">View Scale</label></NameCell>
                      <ValueCell $flush $w={279}><ScaleInput id="scale" defaultValue="1 : 100" /></ValueCell>
                      <ValueCell $w={36} />
                    </tr>
                    <tr>
                      <NameCell scope="row" $dim>{"Scale Value    1:"}</NameCell>
                      <ValueCell $dim>100</ValueCell>
                      <ValueCell />
                    </tr>
                    {properties.map(([name, value]) => (
                      <tr key={name}>
                        <NameCell scope="row">{name}</NameCell>
                        <ValueCell $flush={value === null}>
                          {value === null ? <EditButton type="button">Edit...</EditButton> : value}
                        </ValueCell>
                        <ValueCell />
                      </tr>
                    ))}
                  </tbody>
                </PropTable>
              </GridBody>
              <VBar>
                <ScrollButton type="button" aria-label="Scroll up"><ScrollMark dir="up" /></ScrollButton>
                <ScrollThumb $n={72} />
                <Track $n={288} />
                <ScrollButton type="button" aria-label="Scroll down"><ScrollMark dir="down" /></ScrollButton>
              </VBar>
            </GridArea>
            <PaletteFoot>
              <a href="#help">Properties help</a>
              <Apply type="button">Apply</Apply>
            </PaletteFoot>
          </Palette>

          <Palette $grow>
            <PaletteHead>
              <h2>Project Browser - SimpleWall_Revit...</h2>
              <button type="button" aria-label="Close project browser"><CrossMark /></button>
            </PaletteHead>
            <Browser>
              <Tree>
                {tree.map((item, i) => (
                  <TreeItem key={i} {...item} />
                ))}
              </Tree>
              <VBar>
                <ScrollButton type="button" aria-label="Scroll up"><ScrollMark dir="up" /></ScrollButton>
                <ScrollThumb $n={414} />
                <Track $n={264} />
                <ScrollButton type="button" aria-label="Scroll down"><ScrollMark dir="down" /></ScrollButton>
              </VBar>
            </Browser>
            <FooterBar>
              <HBar>
                <ScrollButton type="button" $across aria-label="Scroll left"><ScrollMark dir="left" /></ScrollButton>
                <ScrollThumb $n={474} />
                <Track $n={27} />
                <ScrollButton type="button" $across aria-label="Scroll right"><ScrollMark dir="right" /></ScrollButton>
              </HBar>
            </FooterBar>
          </Palette>
        </Dock>

        <Documents>
          <DocTabs>
            <DocTab type="button" $on>
              <Icon>{icons.sheets}</Icon>
              Level 1
              <Push />
              <CrossMark />
            </DocTab>
            {docTabs.map(([icon, label]) => (
              <DocTab type="button" key={label}>
                <Icon>{icons[icon]}</Icon>
                {label}
              </DocTab>
            ))}
            <Push />
            <IconCell type="button" aria-label="View list" $w={48}><BarDown /></IconCell>
          </DocTabs>

          <CanvasRow>
            <Canvas>
              <Plan viewBox="0 0 3384 1677" fill="none" stroke="#000" role="img" aria-label="Floor plan with a wall and a door">
                <g strokeWidth="14" strokeLinejoin="round">
                  <path d="M445 424h955v123H445z" />
                  <path d="M1963 424h955v123h-955z" />
                  <path d="M1398 547h33v565h-33z" strokeWidth="12" />
                </g>
                <polyline
                  strokeWidth="6"
                  points="1963,552 1956,650 1926,757 1878,849 1812,933 1730,1006 1638,1061 1536,1095 1434,1111"
                />
              </Plan>
              <NavBar>
                <NavSmall type="button" aria-label="Close navigation bar">
                  <Icon size={24}>
                    <circle cx="8" cy="8" r="6.500" stroke="#bdbdbd" strokeWidth="3" />
                    <path d="M5 5l6 6M11 5l-6 6" stroke="#bdbdbd" strokeWidth="2.400" />
                  </Icon>
                </NavSmall>
                <NavTool type="button" aria-label="Steering wheel">
                  <Svg width="72" height="69" viewBox="0 0 24 23" fill="none" aria-hidden="true">
                    <path d="M9.500.500H18q1 0 1 1V9c0 6-4 9.500-9.500 9.500S.500 15 .500 9.500 4 .500 9.500.500z" fill="#eceef2" stroke="#979a9f" />
                    <circle cx="9.500" cy="9" r="4.200" fill="#f3f4f7" stroke="#979a9f" />
                    <path d="M3.500 15.500l3-3" stroke="#979a9f" />
                    <text x="11.500" y="22" fontFamily="Open Sans" fontWeight="600" fontSize="9.500" fill="#6f9cc9" stroke="#f4f4f4" strokeWidth="2" paintOrder="stroke">2D</text>
                  </Svg>
                  <Triangle color="#8d9197" />
                </NavTool>
                <NavTool type="button" aria-label="Zoom in region" $end>
                  <Svg width="48" height="51" viewBox="0 0 16 17" fill="none" aria-hidden="true">
                    <path d="M.500.500h10v10H.500z" fill="#bcd3a5" stroke="#86ae80" />
                    <path d="M11.500 11.500l4 4" stroke="#999" strokeWidth="1.600" />
                    <circle cx="9.800" cy="10" r="3" fill="#eef6f5" stroke="#999" />
                  </Svg>
                  <Triangle color="#8d9197" />
                </NavTool>
                <NavSmall type="button" aria-label="Navigation bar options">
                  <Icon size={24}>
                    <circle cx="8" cy="8" r="6.500" stroke="#bdbdbd" strokeWidth="3" />
                    <path d="M4 7h8M5 9.500h6L8 12z" stroke="#bdbdbd" strokeWidth="1.600" />
                  </Icon>
                </NavSmall>
              </NavBar>
            </Canvas>
            <VBar $w={48}>
              <ScrollButton type="button" aria-label="Scroll up"><ScrollMark dir="up" /></ScrollButton>
              <Track $n={763} />
              <ScrollThumb $n={52} />
              <Track $n={760} />
              <ScrollButton type="button" aria-label="Scroll down"><ScrollMark dir="down" /></ScrollButton>
            </VBar>
          </CanvasRow>

          <ViewBar>
            <ScaleButton type="button">1 : 100</ScaleButton>
            {viewTools.map(([icon, label]) => (
              <ViewTool type="button" key={icon} aria-label={label} title={label}>
                <Icon>{icons[icon]}</Icon>
              </ViewTool>
            ))}
            <WideBar>
              <ScrollButton type="button" $across aria-label="Scroll left"><ScrollMark dir="left" /></ScrollButton>
              <Track $n={1150} />
              <ScrollThumb $n={52} />
              <Track $n={1150} />
              <ScrollButton type="button" $across aria-label="Scroll right"><ScrollMark dir="right" /></ScrollButton>
            </WideBar>
            <Grip />
          </ViewBar>
        </Documents>
      </Work>

      <StatusBar>
        <Hint>Click to select, TAB for alternates, CTRL adds, SHIFT unselects.</Hint>
        <Tool name="worksets" label="Worksets" />
        <Space $w={12} />
        <SelectBox $w={612} $h={54} $inset={9}>
          <StatusSelect aria-label="Active workset" defaultValue="" disabled>
            <option value="" />
          </StatusSelect>
          <ThinChevron color="#aaa" />
        </SelectBox>
        <Space $w={15} />
        <Tool name="editRequests" label="Editing requests" />
        <Count $w={84}>:0</Count>
        <Tool name="designOptions" label="Design options" w={78} />
        <Tool name="exitOption" label="Exclude options" w={78} />
        <Space $w={9} />
        <SelectBox $w={612} $h={54} $inset={9}>
          <StatusSelect aria-label="Design option" defaultValue="main" disabled>
            <option value="main">Main Model</option>
          </StatusSelect>
          <ThinChevron color="#aaa" />
        </SelectBox>
        <Push />
        {selectTools.map(([icon, label]) => (
          <Tool key={icon} name={icon} label={label} w={78} />
        ))}
        <Tool name="filter" label="Filter" w={60} />
        <Count $w={222}>:0</Count>
        <EndRule />
      </StatusBar>
    </Shell>
  );
}
